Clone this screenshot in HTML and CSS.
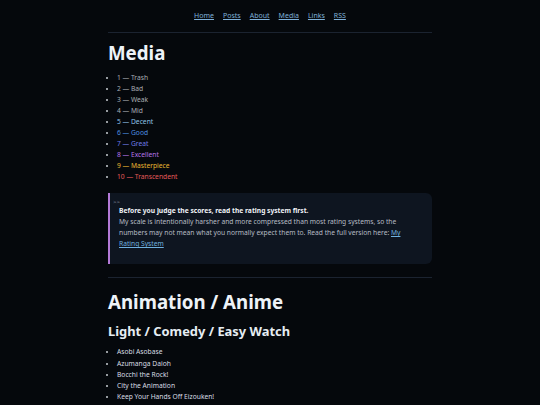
FILE: index.html
```html
<!DOCTYPE html>
<html lang="en">
<head>
<meta charset="utf-8">
<title>Media</title>
<link rel="stylesheet" href="styles.css">
</head>
<body>
<nav class="nav">
  <a href="#">Home</a>
  <a href="#">Posts</a>
  <a href="#">About</a>
  <a href="#">Media</a>
  <a href="#">Links</a>
  <a href="#">RSS</a>
</nav>
<main class="page">
  <hr class="rule">
  <h1 class="title">Media</h1>
  <ul class="list">
    <li class="r1">1 — Trash</li>
    <li class="r2">2 — Bad</li>
    <li class="r3">3 — Weak</li>
    <li class="r4">4 — Mid</li>
    <li class="r5">5 — Decent</li>
    <li class="r6">6 — Good</li>
    <li class="r7">7 — Great</li>
    <li class="r8">8 — Excellent</li>
    <li class="r9">9 — Masterpiece</li>
    <li class="r10">10 — Transcendent</li>
  </ul>
  <aside class="callout">
    <div class="callout-mark">&gt;&gt;</div>
    <div class="callout-body">
      <strong>Before you judge the scores, read the rating system first.</strong><br>
      My scale is intentionally harsher and more compressed than most rating systems, so the numbers may not mean what you normally expect them to. Read the full version here: <a href="#">My Rating System</a>
    </div>
  </aside>
  <hr class="rule rule-2">
  <h1 class="title title-2">Animation / Anime</h1>
  <h2 class="sub">Light / Comedy / Easy Watch</h2>
  <ul class="list list-plain">
    <li>Asobi Asobase</li>
    <li>Azumanga Daioh</li>
    <li>Bocchi the Rock!</li>
    <li>City the Animation</li>
    <li>Keep Your Hands Off Eizouken!</li>
  </ul>
</main>
</body>
</html>
```
FILE: styles.css
```css
html, body {
  margin: 0;
  padding: 0;
  background: #05080c;
}
body {
  font-family: "Noto Sans", "Open Sans", sans-serif;
  color: #e6edf3;
  font-size: 6.7px;
  line-height: 11px;
}
.nav {
  display: flex;
  justify-content: center;
  gap: 9px;
  padding-top: 10px;
  height: 12px;
}
.nav a {
  color: #7fb0d8;
  font-size: 7px;
  text-decoration: underline;
}
.page {
  width: 324px;
  margin: 0 auto;
}
.rule {
  border: 0;
  height: 1px;
  background: #1b2330;
  margin: 10px 0 0;
}
.title {
  font-size: 18.7px;
  line-height: 26px;
  margin: 7px 0 5.5px;
  font-weight: 700;
  color: #eef3f8;
}
.list {
  margin: 0;
  padding-left: 9px;
  color: #b3b8bf;
}
.list li {
  line-height: 11.1px;
}
.list li::marker { color: #c8ccd2; }
.r1, .r2, .r3, .r4 { color: #a9adb3; }
.r5 { color: #8ec2e6; }
.r6 { color: #4c8fe0; }
.r7 { color: #6f7ce8; }
.r8 { color: #b775e6; }
.r9 { color: #e8b632; }
.r10 { color: #e45a5a; }
.callout {
  margin-top: 10.5px;
  background: #0e1520;
  border-left: 2px solid #b47ad8;
  border-radius: 0 6px 6px 0;
  padding: 6px 12px 14.5px 3px;
}
.callout-mark {
  font-size: 6px;
  line-height: 6.5px;
  color: #8a93a0;
}
.callout-body {
  padding-left: 6px;
  color: #b6bcc4;
  line-height: 11px;
}
.callout-body strong {
  color: #eef2f6;
}
.callout-body a {
  color: #6fb0df;
}
.rule-2 {
  margin-top: 13px;
}
.title-2 {
  margin: 11px 0 6px;
}
.sub {
  font-size: 12.9px;
  line-height: 20px;
  margin: 0 0 5.5px;
  font-weight: 700;
  color: #e6edf3;
}
.list-plain li { color: #d8dde3; }
```
